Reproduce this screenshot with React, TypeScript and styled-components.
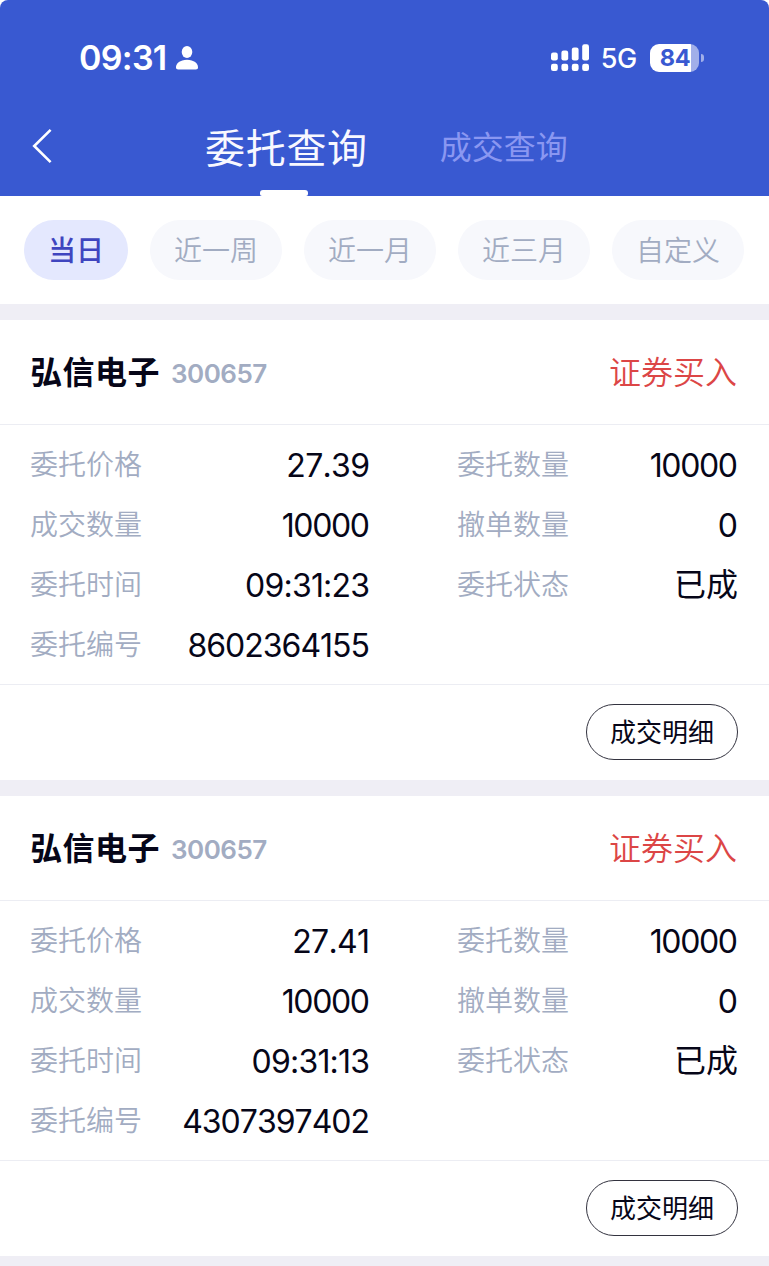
import React from 'react';
import styled, { createGlobalStyle } from 'styled-components';

const GlobalStyle = createGlobalStyle`
  * { box-sizing: border-box; }
  body {
    margin: 0;
    background: #fff;
    font-family: Inter, "Noto Sans CJK SC", sans-serif;
    color: #060618;
  }
  button {
    font: inherit;
    border: 0;
    background: none;
    padding: 0;
    margin: 0;
  }
`;

const Page = styled.main`
  width: 100%;
  min-height: 1266px;
  background: #efeef5;
`;

const HeaderBackdrop = styled.div`
  background: #fff;
`;

const Header = styled.header`
  height: 196px;
  background: #3959d1;
  border-radius: 8px 8px 0 0;
  color: #fff;
`;

const StatusBar = styled.div`
  height: 96px;
  padding: 20px 65px 0 79px;
  display: flex;
  justify-content: space-between;
  align-items: center;
`;

const StatusGroup = styled.div`
  display: flex;
  align-items: center;
`;

const Clock = styled.span`
  font-size: 34px;
  line-height: 40px;
  font-weight: 600;
  letter-spacing: -0.7px;
  margin-right: 9px;
`;

const Network = styled.span`
  font-size: 27px;
  line-height: 30px;
  font-weight: 500;
  letter-spacing: -0.3px;
  margin: 2px 13px 0 12px;
`;

const Battery = styled.div`
  width: 49px;
  height: 28px;
  padding-left: 1px;
  border-radius: 9px;
  background: linear-gradient(90deg, #fff 0 41px, #a1afe9 41px);
  color: #3959d1;
  font-size: 23.5px;
  font-weight: 700;
  line-height: 28px;
  text-align: center;
  letter-spacing: -0.3px;
`;

const BatteryTip = styled.div`
  width: 3px;
  height: 8px;
  margin-left: 2px;
  border-radius: 0 4px 4px 0;
  background: #a1afe9;
`;

const NavBar = styled.nav`
  height: 100px;
  padding-left: 31px;
  display: flex;
  align-items: stretch;
`;

const BackButton = styled.button`
  width: 174px;
  display: flex;
  align-items: center;
  color: #fff;
`;

const Tab = styled.button<{ $active?: boolean }>`
  display: flex;
  flex-direction: column;
  align-items: center;
  justify-content: space-between;
  padding-top: ${(p) => (p.$active ? '23px' : '22px')};
  margin-right: 72px;
  font-size: ${(p) => (p.$active ? '40px' : '32px')};
  line-height: 60px;
  font-weight: 400;
  letter-spacing: ${(p) => (p.$active ? '0.7px' : '0')};
  color: ${(p) => (p.$active ? '#f8f8ff' : '#8a97f1')};
`;

const TabMarker = styled.span`
  width: 48px;
  height: 6px;
  margin-right: 5px;
  border-radius: 3px 3px 2px 2px;
  background: #fff;
`;

const FilterBar = styled.div`
  height: 108px;
  padding: 24px 24px 0;
  display: flex;
  gap: 22px;
  background: #fff;
`;

const Chip = styled.button<{ $active?: boolean }>`
  height: 60px;
  padding: 3px 24px 0;
  border-radius: 30px;
  font-size: 28px;
  line-height: 57px;
  font-weight: ${(p) => (p.$active ? 500 : 350)};
  color: ${(p) => (p.$active ? '#3f45bf' : '#a2acc2')};
  background: ${(p) => (p.$active ? '#e4e8fe' : '#f7f8fc')};
`;

const OrderCard = styled.article`
  height: 460px;
  margin-top: 16px;
  background: #fff;
`;

const CardHeader = styled.div`
  height: 105px;
  padding: 2px 32px 0 30px;
  display: flex;
  align-items: center;
  border-bottom: 1px solid #ecedf3;
`;

const StockName = styled.h2`
  margin: 0;
  font-size: 32px;
  line-height: 48px;
  font-weight: 700;
  letter-spacing: 0.5px;
`;

const StockCode = styled.span`
  margin: 1px 0 0 11px;
  font-size: 26px;
  line-height: 36px;
  font-weight: 600;
  letter-spacing: -0.5px;
  color: #a2acc2;
`;

const Direction = styled.span`
  margin-left: auto;
  font-size: 32px;
  line-height: 48px;
  font-weight: 350;
  color: #dc4646;
`;

const Details = styled.div`
  height: 260px;
  padding: 10px 31px 0 30px;
  display: grid;
  grid-template-columns: 340px 281px;
  grid-auto-rows: 60px;
  justify-content: space-between;
  border-bottom: 1px solid #ecedf3;
`;

const Field = styled.div`
  display: flex;
  justify-content: space-between;
  align-items: center;
`;

const Label = styled.span`
  margin-bottom: 1px;
  font-size: 28px;
  line-height: 40px;
  font-weight: 350;
  color: #a2acc2;
`;

const Value = styled.span<{ $tracking: number }>`
  padding-top: ${(p) => (p.$tracking === 0 ? 0 : 2)}px;
  font-size: 32px;
  line-height: 48px;
  font-weight: 380;
  font-kerning: none;
  letter-spacing: ${(p) => p.$tracking}px;
  margin-right: ${(p) => -p.$tracking}px;
`;

const CardFooter = styled.div`
  height: 95px;
  padding: 0 31px 1px 0;
  display: flex;
  align-items: center;
  justify-content: flex-end;
`;

const DetailButton = styled.button`
  width: 152px;
  height: 56px;
  padding: 2px 0 0;
  border: 1px solid #33333f;
  border-radius: 28px;
  font-size: 26px;
  line-height: 52px;
  color: #060618;
`;

type FieldData = { label: string; value: string; tracking?: number };
type Order = { name: string; code: string; direction: string; fields: FieldData[] };

const filters = ['当日', '近一周', '近一月', '近三月', '自定义'];

const makeOrder = (price: string, time: string, id: string): Order => ({
  name: '弘信电子',
  code: '300657',
  direction: '证券买入',
  fields: [
    { label: '委托价格', value: price, tracking: -0.7 },
    { label: '委托数量', value: '10000', tracking: -1.35 },
    { label: '成交数量', value: '10000', tracking: -1.35 },
    { label: '撤单数量', value: '0' },
    { label: '委托时间', value: time, tracking: -0.8 },
    { label: '委托状态', value: '已成', tracking: 0 },
    { label: '委托编号', value: id },
  ],
});

const orders = [
  makeOrder('27.39', '09:31:23', '8602364155'),
  makeOrder('27.41', '09:31:13', '4307397402'),
];

const PersonIcon = () => (
  <svg width="22" height="24" viewBox="0 0 22 24" fill="currentColor">
    <ellipse cx="11" cy="6" rx="5.3" ry="5.9" />
    <path d="M0 21.2C0 17.5 4 13.7 11 13.7S22 17.5 22 21.2C22 22.8 21.2 23.4 19.8 23.4H2.2C.8 23.4 0 22.8 0 21.2Z" />
  </svg>
);

const SignalIcon = () => (
  <svg width="38" height="28" viewBox="0 0 38 28" fill="currentColor">
    <rect x="0" y="8.5" width="6.8" height="8" rx="2.2" />
    <rect x="10.4" y="6.5" width="6.8" height="10" rx="2.2" />
    <rect x="20.8" y="3.5" width="6.8" height="13" rx="2.2" />
    <rect x="31.2" y="0.2" width="6.8" height="16.3" rx="2.2" />
    <rect x="0" y="19.8" width="6.8" height="7.2" rx="2.2" />
    <rect x="10.4" y="19.8" width="6.8" height="7.2" rx="2.2" />
    <rect x="20.8" y="19.8" width="6.8" height="7.2" rx="2.2" />
    <rect x="31.2" y="19.8" width="6.8" height="7.2" rx="2.2" />
  </svg>
);

const BackIcon = () => (
  <svg width="22" height="36" viewBox="0 0 22 36" fill="none" stroke="currentColor" strokeWidth="2.6">
    <path d="M19.6 1.8 3.2 18 19.6 34.2" />
  </svg>
);

export default function App() {
  return (
    <Page>
      <GlobalStyle />
      <HeaderBackdrop>
        <Header>
          <StatusBar>
            <StatusGroup>
              <Clock>09:31</Clock>
              <PersonIcon />
            </StatusGroup>
            <StatusGroup>
              <SignalIcon />
              <Network>5G</Network>
              <Battery>84</Battery>
              <BatteryTip />
            </StatusGroup>
          </StatusBar>
          <NavBar>
            <BackButton aria-label="返回">
              <BackIcon />
            </BackButton>
            <Tab $active>
              委托查询
              <TabMarker />
            </Tab>
            <Tab>成交查询</Tab>
          </NavBar>
        </Header>
      </HeaderBackdrop>
      <FilterBar>
        {filters.map((name, i) => (
          <Chip key={name} $active={i === 0}>
            {name}
          </Chip>
        ))}
      </FilterBar>
      {orders.map((order, i) => (
        <OrderCard key={i}>
          <CardHeader>
            <StockName>{order.name}</StockName>
            <StockCode>{order.code}</StockCode>
            <Direction>{order.direction}</Direction>
          </CardHeader>
          <Details>
            {order.fields.map((f) => (
              <Field key={f.label}>
                <Label>{f.label}</Label>
                <Value $tracking={f.tracking ?? -1}>{f.value}</Value>
              </Field>
            ))}
          </Details>
          <CardFooter>
            <DetailButton>成交明细</DetailButton>
          </CardFooter>
        </OrderCard>
      ))}
    </Page>
  );
}
